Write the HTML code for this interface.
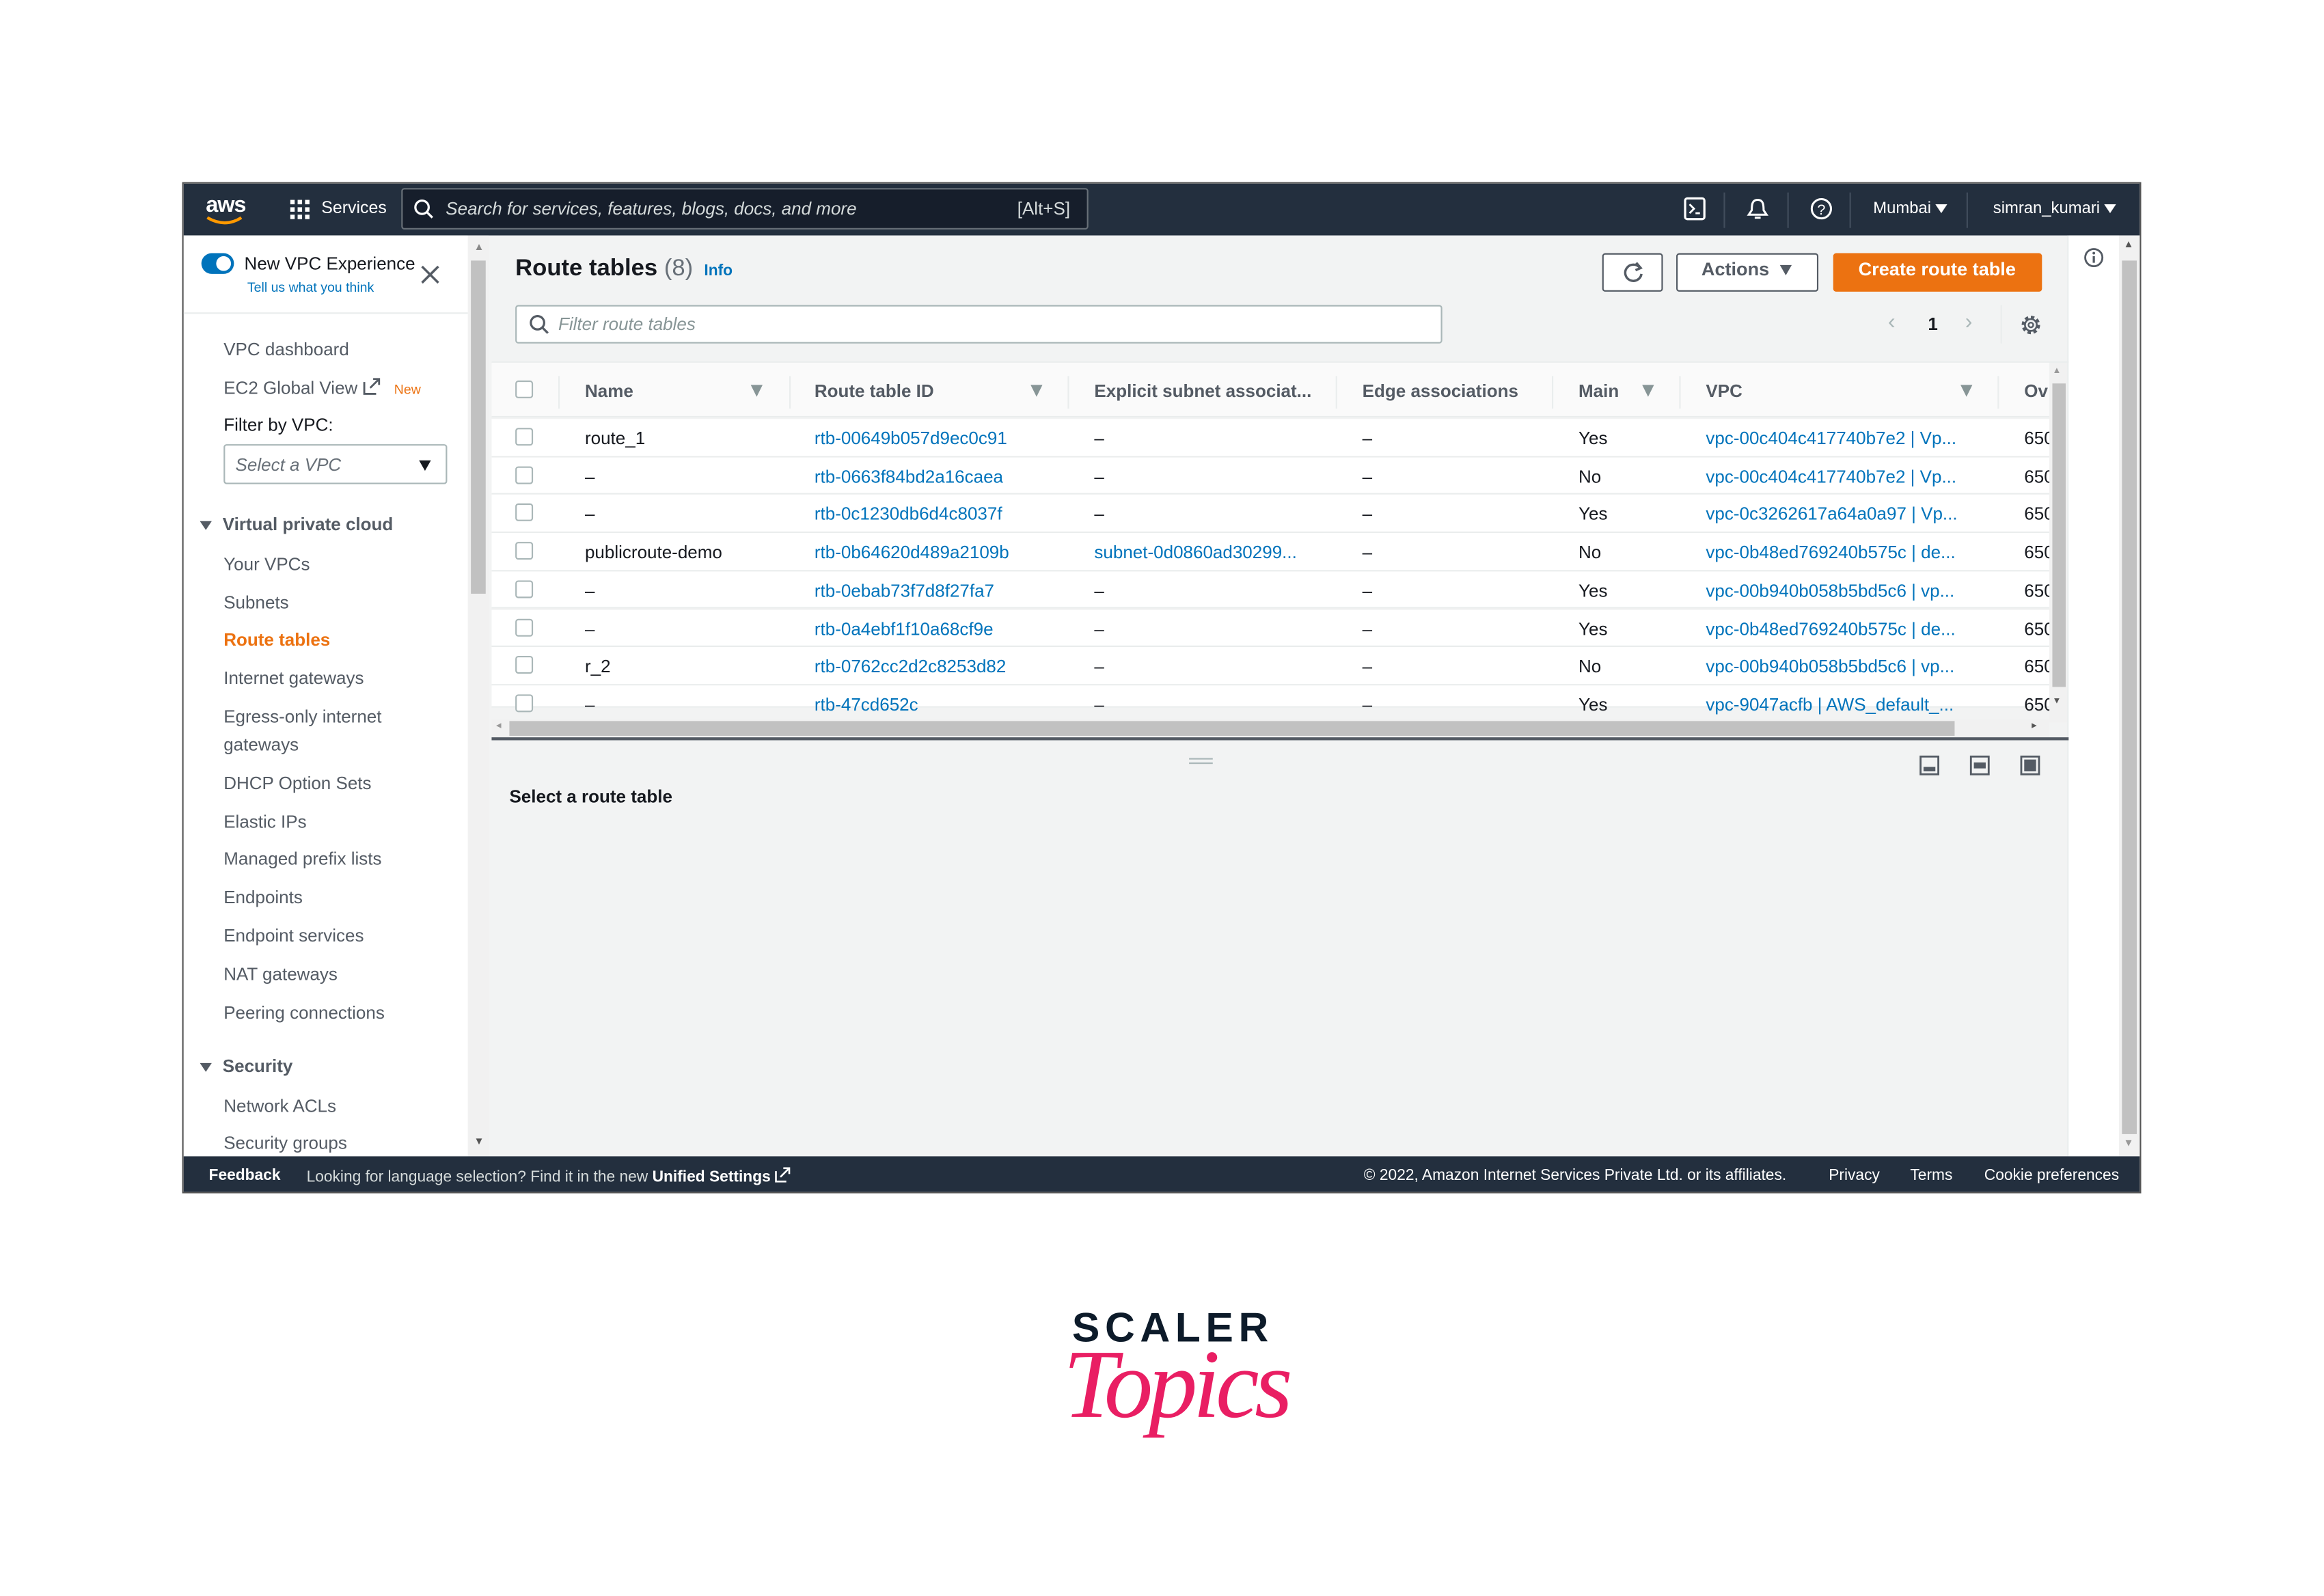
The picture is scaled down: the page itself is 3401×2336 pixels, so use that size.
<!DOCTYPE html>
<html><head><meta charset="utf-8">
<style>
*{box-sizing:border-box;margin:0;padding:0}
html,body{width:3401px;height:2336px;overflow:hidden;background:#fff}
#c{position:absolute;left:0;top:0;width:1560px;height:1078px;transform:scale(2.167);transform-origin:0 0;font-family:"Liberation Sans",sans-serif;color:#16191f;font-size:12px}
.a{position:absolute;white-space:nowrap}
.frame{position:absolute;left:123px;top:123px;width:1323px;height:683px;border:1.5px solid #555;background:#f2f3f3;overflow:hidden}
.hdr{position:absolute;left:0;top:0;width:100%;height:35px;background:#232f3e;color:#fff}
.lnk{color:#0073bb}
.row{position:absolute;left:208px;width:1052px;height:25.7px;border-bottom:1px solid #eaeded;background:#fff}
.cb{position:absolute;width:12px;height:12px;border:1px solid #aab7b8;border-radius:2px;background:#fff}
.side{position:absolute;left:0;top:35px;width:192px;height:622px;background:#fff}
.si{position:absolute;left:27px;font-size:12px;color:#545b64}
.ft{position:absolute;left:0;top:657px;width:100%;height:26px;background:#232f3e;color:#fff;font-size:10.5px}
.tri{display:inline-block;width:0;height:0;border-left:4px solid transparent;border-right:4px solid transparent;border-top:6px solid currentColor;vertical-align:middle}
.fi{position:absolute;width:0;height:0;border-left:4.5px solid transparent;border-right:4.5px solid transparent;border-top:8px solid #879596}
</style></head><body><div id="c">
<div class="frame">
 <div class="hdr">
  <div class="a" style="left:15px;top:6px;font-size:15px;font-weight:bold;letter-spacing:-0.5px">aws</div>
  <svg class="a" style="left:15px;top:22px" width="26" height="7"><path d="M1 1 Q13 8 24 1" stroke="#ff9900" stroke-width="2" fill="none"/></svg>
  <svg class="a" style="left:72px;top:11px" width="14" height="14" fill="#fff"><rect x="0" y="0" width="3" height="3"/><rect x="5" y="0" width="3" height="3"/><rect x="10" y="0" width="3" height="3"/><rect x="0" y="5" width="3" height="3"/><rect x="5" y="5" width="3" height="3"/><rect x="10" y="5" width="3" height="3"/><rect x="0" y="10" width="3" height="3"/><rect x="5" y="10" width="3" height="3"/><rect x="10" y="10" width="3" height="3"/></svg>
  <div class="a" style="left:93px;top:11px;font-size:11.5px">Services</div>
  <div class="a" style="left:147px;top:3px;width:464px;height:28px;background:#161e2b;border:1px solid #687078;border-radius:2px"></div>
  <svg class="a" style="left:155px;top:10px" width="14" height="14"><circle cx="6" cy="6" r="4.5" stroke="#fff" stroke-width="1.5" fill="none"/><path d="M9 9 L13 13" stroke="#fff" stroke-width="1.5"/></svg>
  <div class="a" style="left:177px;top:10px;font-size:12px;font-style:italic;color:#d5dbdb">Search for services, features, blogs, docs, and more</div>
  <div class="a" style="left:563px;top:10px;font-size:12px;color:#d5dbdb">[Alt+S]</div>
  <svg class="a" style="left:1013px;top:9px" width="15" height="16"><rect x="1" y="1" width="13" height="14" rx="1.5" stroke="#fff" stroke-width="1.5" fill="none"/><path d="M4 5 L7 8 L4 11 M8 11 H11" stroke="#fff" stroke-width="1.3" fill="none"/></svg>
  <svg class="a" style="left:1055px;top:9px" width="16" height="17"><path d="M8 2 C4 2 4 6 4 9 L2 12 H14 L12 9 C12 6 12 2 8 2Z M6 14 H10" stroke="#fff" stroke-width="1.4" fill="none"/></svg>
  <svg class="a" style="left:1098px;top:9px" width="16" height="16"><circle cx="8" cy="8" r="6.5" stroke="#fff" stroke-width="1.4" fill="none"/><text x="8" y="12" font-size="10" fill="#fff" text-anchor="middle" font-family="Liberation Sans">?</text></svg>
  <div class="a" style="left:1040px;top:6px;width:1px;height:24px;background:#414d5c"></div>
  <div class="a" style="left:1083px;top:6px;width:1px;height:24px;background:#414d5c"></div>
  <div class="a" style="left:1125px;top:6px;width:1px;height:24px;background:#414d5c"></div>
  <div class="a" style="left:1204px;top:6px;width:1px;height:24px;background:#414d5c"></div>
  <div class="a" style="left:1141px;top:11px;font-size:11px">Mumbai <span class="tri"></span></div>
  <div class="a" style="left:1222px;top:11px;font-size:11px">simran_kumari <span class="tri"></span></div>
 </div>

 <div class="side">
  <div class="a" style="left:12px;top:12px;width:22px;height:14px;border-radius:7px;background:#0073bb"></div>
  <div class="a" style="left:22px;top:14px;width:10px;height:10px;border-radius:5px;background:#fff"></div>
  <div class="a" style="left:41px;top:12px;font-size:12px">New VPC Experience</div>
  <div class="a lnk" style="left:43px;top:30px;font-size:9px">Tell us what you think</div>
  <svg class="a" style="left:160px;top:20px" width="13" height="13"><path d="M1 1 L12 12 M12 1 L1 12" stroke="#545b64" stroke-width="1.6"/></svg>
  <div class="a" style="left:0;top:52px;width:192px;height:1px;background:#eaeded"></div>
  <div class="si" style="top:70px">VPC dashboard</div>
  <div class="si" style="top:96px">EC2 Global View <svg width="12" height="12" style="vertical-align:-1px"><path d="M1 3 V11 H9 M5 7 L11 1 M7 1 H11 V5" stroke="#545b64" stroke-width="1.3" fill="none"/></svg> <span style="color:#ec7211;font-size:9px;margin-left:6px">New</span></div>
  <div class="si" style="top:121px;color:#16191f">Filter by VPC:</div>
  <div class="a" style="left:27px;top:141px;width:151px;height:27px;border:1px solid #aab7b8;border-radius:2px"></div>
  <div class="a" style="left:35px;top:148px;font-style:italic;color:#687078">Select a VPC</div>
  <div class="a" style="left:159px;top:148px;color:#16191f"><span class="tri" style="border-top-width:7px;border-left-width:4.5px;border-right-width:4.5px"></span></div>
  <div class="a" style="left:11px;top:188px;font-weight:bold;color:#545b64"><span class="tri" style="margin-right:4px"></span> Virtual private cloud</div>
  <div class="si" style="top:215px">Your VPCs</div>
  <div class="si" style="top:241px">Subnets</div>
  <div class="si" style="top:266px;color:#ec7211;font-weight:bold">Route tables</div>
  <div class="si" style="top:292px">Internet gateways</div>
  <div class="si" style="top:318px">Egress-only internet</div>
  <div class="si" style="top:337px">gateways</div>
  <div class="si" style="top:363px">DHCP Option Sets</div>
  <div class="si" style="top:389px">Elastic IPs</div>
  <div class="si" style="top:414px">Managed prefix lists</div>
  <div class="si" style="top:440px">Endpoints</div>
  <div class="si" style="top:466px">Endpoint services</div>
  <div class="si" style="top:492px">NAT gateways</div>
  <div class="si" style="top:518px">Peering connections</div>
  <div class="a" style="left:11px;top:554px;font-weight:bold;color:#545b64"><span class="tri" style="margin-right:4px"></span> Security</div>
  <div class="si" style="top:581px">Network ACLs</div>
  <div class="si" style="top:606px">Security groups</div>
 </div>
 <div class="a" style="left:192px;top:35px;width:14px;height:622px;background:#f1f1f1"></div>
 <div class="a" style="left:194px;top:52px;width:10px;height:225px;background:#c1c1c1"></div>
 <div class="a" style="left:196px;top:40px;font-size:7px;color:#888">▲</div>
 <div class="a" style="left:196px;top:644px;font-size:7px;color:#555">▼</div>

 <div class="a" style="left:1272px;top:35px;width:35px;height:622px;background:#fff;border-left:1px solid #eaeded"></div>
 <svg class="a" style="left:1283px;top:43px" width="14" height="14"><circle cx="7" cy="7" r="5.8" stroke="#545b64" stroke-width="1.3" fill="none"/><path d="M7 6 V10.5" stroke="#545b64" stroke-width="1.5"/><circle cx="7" cy="4" r="0.9" fill="#545b64"/></svg>
 <div class="a" style="left:1307px;top:35px;width:14px;height:622px;background:#f1f1f1"></div>
 <div class="a" style="left:1309px;top:52px;width:10px;height:590px;background:#c1c1c1"></div>
 <div class="a" style="left:1310px;top:38px;font-size:7px;color:#555">▲</div>
 <div class="a" style="left:1310px;top:645px;font-size:7px;color:#999">▼</div>

 <div class="a" style="left:224px;top:49px;font-size:16px;font-weight:bold">Route tables <span style="font-weight:normal;color:#687078">(8)</span> <span class="lnk" style="font-size:10.5px;margin-left:3px">Info</span></div>
 <div class="a" style="left:958px;top:47px;width:41px;height:26px;border:1px solid #545b64;border-radius:2px;background:#fff"></div>
 <svg class="a" style="left:971px;top:52px" width="16" height="16"><path d="M12.5 5 A5.5 5.5 0 1 0 13.5 9" stroke="#545b64" stroke-width="1.6" fill="none"/><path d="M10 1.5 L13 5 L9.5 6.5" stroke="#545b64" stroke-width="1.6" fill="none"/></svg>
 <div class="a" style="left:1008px;top:47px;width:96px;height:26px;border:1px solid #545b64;border-radius:2px;background:#fff"></div>
 <div class="a" style="left:1025px;top:51px;font-size:12.5px;font-weight:bold;color:#545b64">Actions &nbsp;<span class="tri" style="border-top-width:7px"></span></div>
 <div class="a" style="left:1114px;top:47px;width:141px;height:26px;background:#ec7211;border-radius:2px"></div>
 <div class="a" style="left:1131px;top:51px;font-size:12.5px;font-weight:bold;color:#fff">Create route table</div>
 <div class="a" style="left:224px;top:82px;width:626px;height:26px;border:1px solid #aab7b8;border-radius:2px;background:#fff"></div>
 <svg class="a" style="left:233px;top:88px" width="14" height="14"><circle cx="6" cy="6" r="4.5" stroke="#545b64" stroke-width="1.5" fill="none"/><path d="M9 9 L13 13" stroke="#545b64" stroke-width="1.5"/></svg>
 <div class="a" style="left:253px;top:88px;font-style:italic;color:#879596">Filter route tables</div>
 <div class="a" style="left:1151px;top:85px;font-size:15px;color:#aab7b8">‹</div>
 <div class="a" style="left:1178px;top:88px;font-weight:bold">1</div>
 <div class="a" style="left:1203px;top:85px;font-size:15px;color:#aab7b8">›</div>
 <div class="a" style="left:1227px;top:82px;width:1px;height:26px;background:#eaeded"></div>
 <svg class="a" style="left:1240px;top:88px" width="15" height="15"><circle cx="7.5" cy="7.5" r="5" stroke="#545b64" stroke-width="2.5" stroke-dasharray="2.2 1.7" fill="none"/><circle cx="7.5" cy="7.5" r="4" stroke="#545b64" stroke-width="1.2" fill="none"/><circle cx="7.5" cy="7.5" r="1.6" stroke="#545b64" stroke-width="1.1" fill="none"/></svg>

 <div class="a" style="left:208px;top:120px;width:1065px;height:1px;background:#eaeded"></div>
 <div class="a" style="left:208px;top:121px;width:1052px;height:37px;background:#fafafa;border-bottom:1px solid #eaeded"></div>
 <div class="cb" style="left:224px;top:133px"></div>
 <div class="a" style="left:253px;top:130px;width:1px;height:22px;background:#eaeded"></div>
 <div class="a" style="left:271px;top:133px;font-weight:bold;color:#545b64">Name</div><div class="fi" style="left:383px;top:136px"></div>
 <div class="a" style="left:409px;top:130px;width:1px;height:22px;background:#eaeded"></div>
 <div class="a" style="left:426px;top:133px;font-weight:bold;color:#545b64">Route table ID</div><div class="fi" style="left:572px;top:136px"></div>
 <div class="a" style="left:597px;top:130px;width:1px;height:22px;background:#eaeded"></div>
 <div class="a" style="left:615px;top:133px;font-weight:bold;color:#545b64">Explicit subnet associat...</div>
 <div class="a" style="left:778px;top:130px;width:1px;height:22px;background:#eaeded"></div>
 <div class="a" style="left:796px;top:133px;font-weight:bold;color:#545b64">Edge associations</div>
 <div class="a" style="left:924px;top:130px;width:1px;height:22px;background:#eaeded"></div>
 <div class="a" style="left:942px;top:133px;font-weight:bold;color:#545b64">Main</div><div class="fi" style="left:985px;top:136px"></div>
 <div class="a" style="left:1010px;top:130px;width:1px;height:22px;background:#eaeded"></div>
 <div class="a" style="left:1028px;top:133px;font-weight:bold;color:#545b64">VPC</div><div class="fi" style="left:1200px;top:136px"></div>
 <div class="a" style="left:1225px;top:130px;width:1px;height:22px;background:#eaeded"></div>
 <div class="a" style="left:1243px;top:133px;font-weight:bold;color:#545b64">Ov</div>
 <div class="a" style="left:1260px;top:121px;width:12px;height:243px;background:#f1f1f1"></div>
 <div class="a" style="left:1262px;top:135px;width:9px;height:205px;background:#c1c1c1"></div>
 <div class="a" style="left:1262px;top:124px;font-size:6px;color:#999">▲</div>
 <div class="a" style="left:1262px;top:347px;font-size:6px;color:#555">▼</div>

 <div id="rows"></div>
 <div class="a" style="left:208px;top:362px;width:1052px;height:12px;background:#f1f1f1"></div>
 <div class="a" style="left:220px;top:363px;width:976px;height:10px;background:#c1c1c1"></div>
 <div class="a" style="left:211px;top:362px;font-size:7px;color:#999">◂</div>
 <div class="a" style="left:1248px;top:362px;font-size:7px;color:#555">▸</div>
 <div class="a" style="left:208px;top:374px;width:1065px;height:1.5px;background:#545b64"></div>

 <div class="a" style="left:679px;top:388px;width:16px;height:1px;background:#aab7b8"></div>
 <div class="a" style="left:679px;top:391px;width:16px;height:1px;background:#aab7b8"></div>
 <svg class="a" style="left:1172px;top:386px" width="110" height="14"><g stroke="#545b64" stroke-width="1.3" fill="none"><rect x="1" y="1" width="12" height="12"/><rect x="35" y="1" width="12" height="12"/><rect x="69" y="1" width="12" height="12"/></g><rect x="3" y="8" width="8" height="3" fill="#545b64"/><rect x="37" y="5" width="8" height="4" fill="#545b64"/><rect x="71" y="3" width="8" height="8" fill="#545b64"/></svg>
 <div class="a" style="left:220px;top:407px;font-weight:bold">Select a route table</div>

 <div class="ft">
  <div class="a" style="left:17px;top:7px;font-weight:bold">Feedback</div>
  <div class="a" style="left:83px;top:7px;color:#d5dbdb">Looking for language selection? Find it in the new <b style="color:#fff">Unified Settings</b> <svg width="11" height="11" style="vertical-align:-1px"><path d="M1 3 V10 H8 M4 7 L10 1 M6 1 H10 V5" stroke="#fff" stroke-width="1.2" fill="none"/></svg></div>
  <div class="a" style="left:797px;top:7px">© 2022, Amazon Internet Services Private Ltd. or its affiliates.</div>
  <div class="a" style="left:1111px;top:7px">Privacy</div>
  <div class="a" style="left:1166px;top:7px">Terms</div>
  <div class="a" style="left:1216px;top:7px">Cookie preferences</div>
 </div>
</div>

<div class="a" style="left:724px;top:881px;font-size:28px;font-weight:bold;letter-spacing:3.5px;color:#0d1b2a">SCALER</div>
<div class="a" style="left:718px;top:898px;font-size:66px;font-style:italic;font-family:'Liberation Serif',serif;color:#e91e63;letter-spacing:-3px">Topics</div>
</div>
<script>
var d=[["route_1","rtb-00649b057d9ec0c91","–","–","Yes","vpc-00c404c417740b7e2 | Vp..."],
["–","rtb-0663f84bd2a16caea","–","–","No","vpc-00c404c417740b7e2 | Vp..."],
["–","rtb-0c1230db6d4c8037f","–","–","Yes","vpc-0c3262617a64a0a97 | Vp..."],
["publicroute-demo","rtb-0b64620d489a2109b","subnet-0d0860ad30299...","–","No","vpc-0b48ed769240b575c | de..."],
["–","rtb-0ebab73f7d8f27fa7","–","–","Yes","vpc-00b940b058b5bd5c6 | vp..."],
["–","rtb-0a4ebf1f10a68cf9e","–","–","Yes","vpc-0b48ed769240b575c | de..."],
["r_2","rtb-0762cc2d2c8253d82","–","–","No","vpc-00b940b058b5bd5c6 | vp..."],
["–","rtb-47cd652c","–","–","Yes","vpc-9047acfb | AWS_default_..."]];
var h="";d.forEach(function(r,i){var t=159+i*25.7;var ty=t+6;
h+='<div class="row" style="top:'+t+'px;height:'+(i==7?15:25.7)+'px;overflow:hidden"></div>';
h+='<div class="cb" style="left:224px;top:'+(t+6)+'px"></div>'+
'<div class="a" style="left:271px;top:'+ty+'px">'+r[0]+'</div>'+
'<div class="a lnk" style="left:426px;top:'+ty+'px">'+r[1]+'</div>'+
'<div class="a '+(r[2]=="–"?'':'lnk')+'" style="left:615px;top:'+ty+'px">'+r[2]+'</div>'+
'<div class="a" style="left:796px;top:'+ty+'px">'+r[3]+'</div>'+
'<div class="a" style="left:942px;top:'+ty+'px">'+r[4]+'</div>'+
'<div class="a lnk" style="left:1028px;top:'+ty+'px">'+r[5]+'</div>'+
'<div class="a" style="left:1243px;top:'+ty+'px;width:17px;overflow:hidden">650</div>';
});document.getElementById("rows").innerHTML=h;
</script>
</body></html>
